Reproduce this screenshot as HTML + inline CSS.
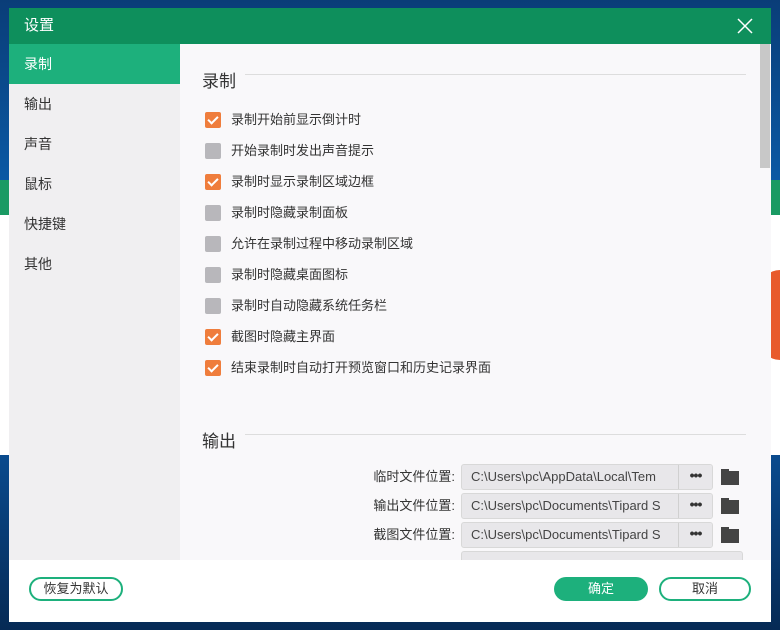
<!DOCTYPE html>
<html><head><meta charset="utf-8"><style>
*{margin:0;padding:0;box-sizing:border-box}
body{width:780px;height:630px;overflow:hidden;position:relative;font-family:"Liberation Sans","Noto Sans CJK SC",sans-serif;background:linear-gradient(180deg,#0a3d78 0%,#0b5aa6 30%,#0a4d92 70%,#062a55 100%);}
.bg-app{position:absolute;left:0;top:180px;width:780px;height:275px;background:#fff}
.dlg{position:absolute;left:9px;top:8px;width:762px;height:614px;background:#f9f8fa}
.title{position:absolute;left:0;top:0;width:762px;height:36px;background:#0e8f5c;color:#fff;font-size:15px;line-height:36px;padding-left:15px}
.close{position:absolute;right:18px;top:10px;width:16px;height:16px}
.side{position:absolute;left:0;top:36px;width:171px;height:516px;background:#f0eff1}
.side div{height:40px;line-height:40px;padding-left:15px;font-size:14px;color:#333}
.side .sel{background:#1db07c;color:#fff}
.foot{position:absolute;left:0;top:552px;width:762px;height:62px;background:#fff}
.sec{position:absolute;left:193px;font-size:17px;color:#333}
.line{position:absolute;height:1px;background:#ddd}
.cb{position:absolute;left:196px;width:16px;height:16px;border-radius:2px;background:#b8b7bb}
.cb.on{background:#ef7d3c}
.cb.on:after{content:"";position:absolute;left:5px;top:2px;width:4px;height:8px;border:solid #fff;border-width:0 2px 2px 0;transform:rotate(45deg)}
.lbl{position:absolute;left:222px;font-size:13px;color:#333;line-height:16px}
.fl{position:absolute;right:316px;font-size:13px;color:#333;line-height:26px;text-align:right}
.inp{position:absolute;left:452px;width:252px;height:26px;border:1px solid #d8d8d8;background:#e8e7ea;border-radius:3px;font-size:13px;color:#444;line-height:24px;padding-left:9px;white-space:nowrap;overflow:hidden}
.inp b{position:absolute;right:0;top:0;width:34px;height:24px;border-left:1px solid #d0d0d0;background:#e8e7ea;font-size:14px;color:#333;text-align:center;line-height:20px;letter-spacing:-1px}
.fold{position:absolute;left:712px;width:18px;height:14px;background:#444}
.fold:before{content:"";position:absolute;left:0;top:-2px;width:8px;height:3px;background:#444}
.btn{position:absolute;top:569px;height:24px;border-radius:12px;font-size:13px;line-height:20px;text-align:center}
</style></head><body>
<div class="bg-app"><div style="position:absolute;left:0;top:0;width:780px;height:35px;background:#1a9a63"></div><div style="position:absolute;right:0;top:90px;width:20px;height:90px;background:#e85a2c;border-radius:40px 0 0 40px"></div></div>
<div class="dlg">
<div class="title">设置
<svg class="close" viewBox="0 0 16 16"><path d="M1 1L15 15M15 1L1 15" stroke="#fff" stroke-width="1.5"/></svg></div>
<div class="side"><div class="sel">录制</div><div>输出</div><div>声音</div><div>鼠标</div><div>快捷键</div><div>其他</div></div>
<div style="position:absolute;left:751px;top:36px;width:10px;height:124px;background:#c8c8c8"></div>
<div class="sec" style="top:59px">录制</div><div class="line" style="left:236px;top:66px;width:501px"></div>
<div class="cb on" style="top:104px"></div><div class="lbl" style="top:104px">录制开始前显示倒计时</div>
<div class="cb" style="top:135px"></div><div class="lbl" style="top:135px">开始录制时发出声音提示</div>
<div class="cb on" style="top:166px"></div><div class="lbl" style="top:166px">录制时显示录制区域边框</div>
<div class="cb" style="top:197px"></div><div class="lbl" style="top:197px">录制时隐藏录制面板</div>
<div class="cb" style="top:228px"></div><div class="lbl" style="top:228px">允许在录制过程中移动录制区域</div>
<div class="cb" style="top:259px"></div><div class="lbl" style="top:259px">录制时隐藏桌面图标</div>
<div class="cb" style="top:290px"></div><div class="lbl" style="top:290px">录制时自动隐藏系统任务栏</div>
<div class="cb on" style="top:321px"></div><div class="lbl" style="top:321px">截图时隐藏主界面</div>
<div class="cb on" style="top:352px"></div><div class="lbl" style="top:352px">结束录制时自动打开预览窗口和历史记录界面</div>
<div class="sec" style="top:419px">输出</div><div class="line" style="left:236px;top:426px;width:501px"></div>
<div class="fl" style="top:456px">临时文件位置:</div><div class="inp" style="top:456px">C:\Users\pc\AppData\Local\Tem<b>•••</b></div><div class="fold" style="top:463px"></div>
<div class="fl" style="top:485px">输出文件位置:</div><div class="inp" style="top:485px">C:\Users\pc\Documents\Tipard S<b>•••</b></div><div class="fold" style="top:492px"></div>
<div class="fl" style="top:514px">截图文件位置:</div><div class="inp" style="top:514px">C:\Users\pc\Documents\Tipard S<b>•••</b></div><div class="fold" style="top:521px"></div>
<div class="inp" style="top:543px;width:282px;height:12px"></div>
<div class="foot"></div>
<div class="btn" style="left:20px;width:94px;border:2px solid #1db07c;color:#333;background:#fff">恢复为默认</div>
<div class="btn" style="left:545px;width:94px;background:#1db07c;color:#fff;line-height:24px">确定</div>
<div class="btn" style="left:650px;width:92px;border:2px solid #1db07c;color:#333;background:#fff">取消</div>
</div>
</body></html>
